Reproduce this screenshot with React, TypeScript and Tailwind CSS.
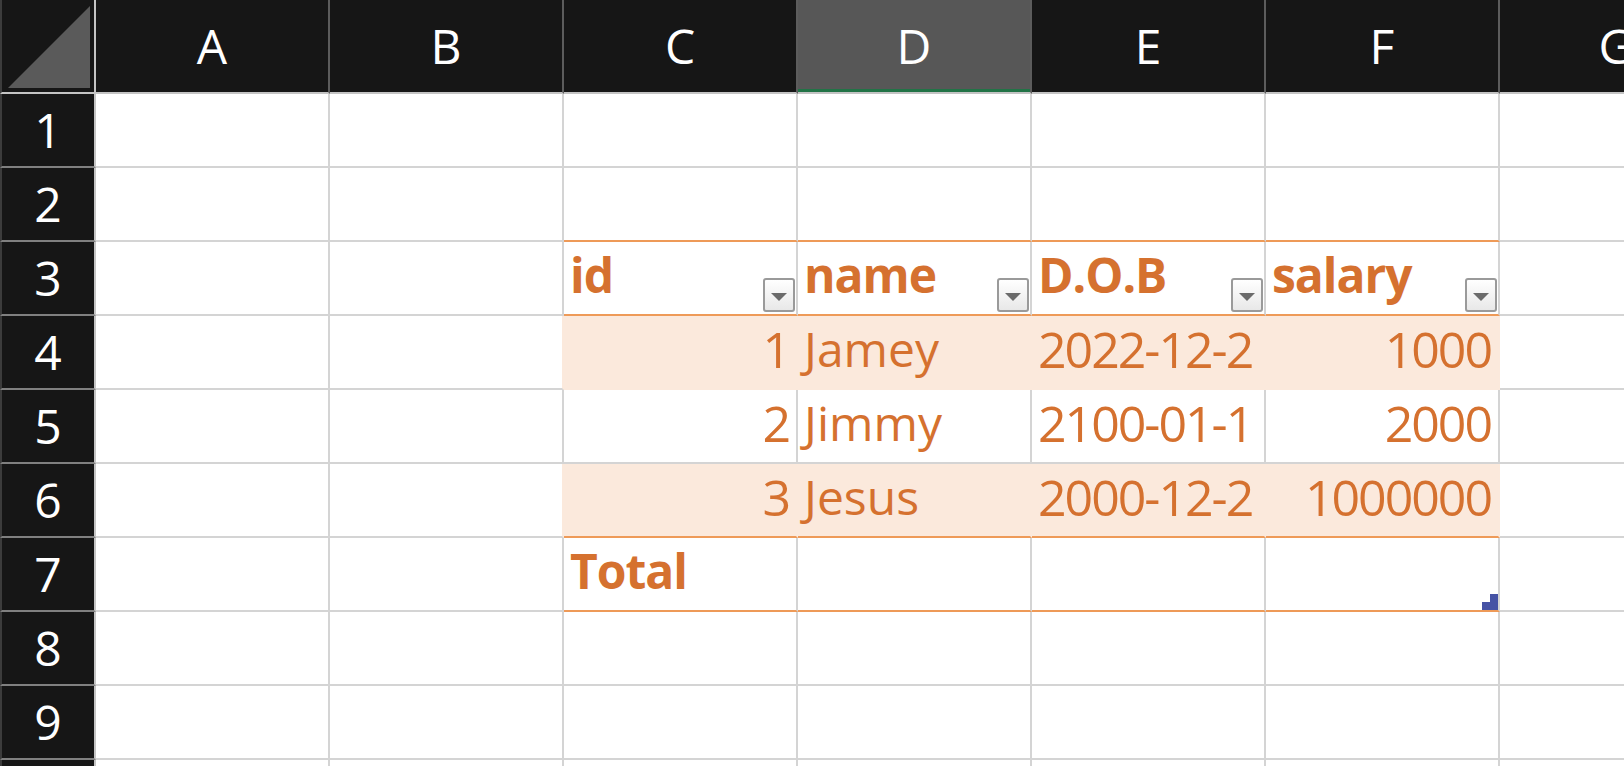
import React from 'react'

const COLS = ['A', 'B', 'C', 'D', 'E', 'F', 'G']
const ROWS = [1, 2, 3, 4, 5, 6, 7, 8, 9, 10]

type Cell = { text: string; align?: 'left' | 'right'; bold?: boolean; num?: boolean }

// table lives in C3:F7 (col index 2..5)
const data: Record<string, Cell> = {
  'C3': { text: 'id', bold: true },
  'D3': { text: 'name', bold: true },
  'E3': { text: 'D.O.B', bold: true },
  'F3': { text: 'salary', bold: true },
  'C4': { text: '1', align: 'right', num: true },
  'D4': { text: 'Jamey' },
  'E4': { text: '2022-12-2', num: true },
  'F4': { text: '1000', align: 'right', num: true },
  'C5': { text: '2', align: 'right', num: true },
  'D5': { text: 'Jimmy' },
  'E5': { text: '2100-01-1', num: true },
  'F5': { text: '2000', align: 'right', num: true },
  'C6': { text: '3', align: 'right', num: true },
  'D6': { text: 'Jesus' },
  'E6': { text: '2000-12-2', num: true },
  'F6': { text: '1000000', align: 'right', num: true },
  'C7': { text: 'Total', bold: true },
}

function FilterButton() {
  return (
    <div className="absolute right-[1px] bottom-[2px] flex h-[34px] w-[32px] items-center justify-center rounded-[3px] border-2 border-[#9a9a9a] bg-gradient-to-b from-[#ffffff] to-[#e8e8e8]">
      <svg width="16" height="8" viewBox="0 0 16 8" className="mt-[4px]">
        <polygon points="0,0 16,0 8,8" fill="#6b6b6b" />
      </svg>
    </div>
  )
}

function BodyCell({ row, col }: { row: number; col: number }) {
  const key = COLS[col] + row
  const cell = data[key]
  const inTable = col >= 2 && col <= 5 && row >= 3 && row <= 7
  const banded = (row === 4 || row === 6) && (inTable || col === 1)
  const bandFill = (row === 4 || row === 6) && inTable

  let borderB = 'border-b-[#d4d4d4]'
  if (col >= 2 && col <= 5 && (row === 2 || row === 3 || row === 6 || row === 7)) borderB = 'border-b-[#ee9a58]'
  else if (row === 4 && inTable) borderB = 'border-b-[#fbe9dc]'

  const borderR = banded ? 'border-r-[#fbe9dc]' : 'border-r-[#d4d4d4]'
  const bg = bandFill ? 'bg-[#fbe9dc]' : 'bg-white'

  let textCls = 'text-[48px] font-normal'
  if (cell?.bold) textCls = 'text-[48px] font-bold tracking-[-1px]'
  else if (cell?.num) textCls = 'text-[50px] font-normal tracking-[-2px]'

  return (
    <div className={`relative flex items-end overflow-hidden border-r-2 border-b-2 ${borderR} ${borderB} ${bg}`}>
      {cell && (
        <span
          className={`w-full whitespace-nowrap leading-none text-[#d5712f] ${
            cell.num ? 'pb-[14px]' : 'pb-[15px]'
          } ${cell.align === 'right' ? 'pr-[7px] text-right' : 'pl-[6px] text-left'} ${textCls}`}
        >
          {cell.text}
        </span>
      )}
      {row === 3 && inTable && <FilterButton />}
      {row === 7 && col === 5 && (
        <div className="absolute right-0 bottom-0 flex h-[16px] w-[16px] flex-col">
          <div className="ml-auto h-[8px] w-[8px] bg-[#4653a5]" />
          <div className="h-[8px] w-[16px] bg-[#4653a5]" />
        </div>
      )}
    </div>
  )
}

export default function App() {
  return (
    <div
      className="h-[766px] w-[1624px] overflow-hidden bg-white"
      style={{ fontFamily: '"Open Sans", "Noto Sans", sans-serif' }}
    >
      <div className="grid grid-cols-[96px_repeat(7,234px)] grid-rows-[94px_repeat(10,74px)]">
        {/* corner */}
        <div className="relative border-r-2 border-b-2 border-l-2 border-r-[#c4c4c4] border-b-[#c4c4c4] border-l-[#3c3c3c] bg-[#161616]">
          <svg width="92" height="92" viewBox="0 0 92 92" className="absolute top-0 left-0">
            <polygon points="88,6 88,88 6,88" fill="#5a5a5a" />
          </svg>
        </div>
        {/* column headers */}
        {COLS.map((c) => (
          <div
            key={c}
            className={`flex items-center justify-center border-r-2 border-b-2 border-r-[#5c5c5c] border-b-[#c4c4c4] text-[48px] leading-none text-white ${
              c === 'D' ? 'bg-[#575757] shadow-[inset_0_-3px_0_#217346]' : 'bg-[#161616]'
            }`}
          >
            {c}
          </div>
        ))}
        {ROWS.map((r) => (
          <React.Fragment key={r}>
            <div className="flex items-center justify-center border-r-2 border-b-2 border-l-2 border-r-[#c4c4c4] border-b-[#808080] border-l-[#3c3c3c] bg-[#161616] text-[48px] leading-none text-white">
              {r}
            </div>
            {COLS.map((c, ci) => (
              <BodyCell key={c + r} row={r} col={ci} />
            ))}
          </React.Fragment>
        ))}
      </div>
    </div>
  )
}
